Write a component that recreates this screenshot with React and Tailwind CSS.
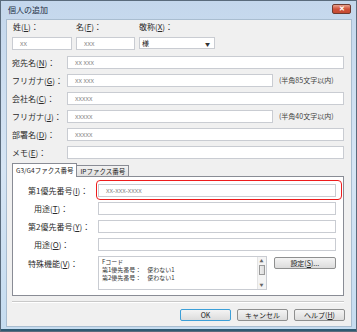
import React from "react";

const F = { fontFamily: '"Noto Sans CJK JP", "Noto Sans", sans-serif' };

function U({ c }) {
  return <span className="underline">{c}</span>;
}

function Lbl({ a, k, className = "" }) {
  return (
    <span className={"text-[8px] leading-none text-[#2a2a2a] whitespace-nowrap " + className}>
      {a}(<U c={k} />)：
    </span>
  );
}

function Inp({ v, className = "" }) {
  return (
    <div className={"h-[13px] bg-white border border-[#c9ccd2] flex items-center px-[7px] text-[7px] leading-none text-[#8a8a8a] " + className}>
      {v}
    </div>
  );
}

function Btn({ children, def, className = "" }) {
  return (
    <div
      className={
        "h-[12px] rounded-[2px] flex items-center justify-center text-[7px] leading-none text-[#222] bg-gradient-to-b from-[#f4f4f4] to-[#dcdcdc] " +
        (def ? "border border-[#3c9fd8] " : "border border-[#8e8f8f] ") +
        className
      }
    >
      {children}
    </div>
  );
}

function LW({ className = "", children }) {
  return <div className={"flex items-center shrink-0 " + className}>{children}</div>;
}

export default function App() {
  return (
    <div style={F} className="w-[357px] h-[332px] bg-white text-[8px] leading-none overflow-hidden">
      <div className="w-[357px] h-[332px] border border-[#5a6b7c] bg-gradient-to-b from-[#c4d7ec] via-[#d6e5f4] to-[#c5dcf0] flex flex-col">
        {/* title bar */}
        <div className="h-[18px] shrink-0 flex items-center justify-between pl-[7px] pr-[5px]">
          <span className="text-[8px] text-[#1e2f45] leading-none">個人の追加</span>
          <div className="w-[19px] h-[10px] mt-[-3px] rounded-[2px] border border-[#6e3a30] bg-gradient-to-b from-[#e8a08c] via-[#d0513a] to-[#c44a32] flex items-center justify-center text-white text-[7px] leading-none font-bold">
            ✕
          </div>
        </div>
        {/* client area */}
        <div className="ml-[5px] mr-[4px] h-[308px] shrink-0 bg-[#f0f0f0] border border-[#a9bdd0] relative">
          {/* row 1 */}
          <div className="flex pl-[5px] pt-[1px] gap-[4px]">
            <div className="w-[60px] flex flex-col gap-[4px]">
              <LW className="h-[12px] pl-[1px]"><Lbl a="姓" k="L" /></LW>
              <Inp v="xx" className="h-[12px] px-[3px]" />
            </div>
            <div className="w-[59px] flex flex-col gap-[4px]">
              <LW className="h-[12px]"><Lbl a="名" k="F" /></LW>
              <Inp v="xxx" className="h-[12px] px-[3px]" />
            </div>
            <div className="w-[76px] flex flex-col gap-[4px]">
              <LW className="h-[12px]"><Lbl a="敬称" k="X" /></LW>
              <div className="h-[12px] bg-white border border-[#c9ccd2] flex items-center justify-between pl-[2px] pr-[4px]">
                <span className="text-[7px] leading-none text-[#222]">様</span>
                <span className="text-[5px] leading-none text-[#333]">▼</span>
              </div>
            </div>
          </div>

          {/* big rows */}
          <div className="flex flex-col gap-[5px] mt-[6px] pl-[5px] pr-[7px]">
            <div className="flex items-center">
              <LW className="w-[55px]"><Lbl a="宛先名" k="N" /></LW>
              <Inp v="xx xxx" className="flex-1 px-[4px]" />
            </div>
            <div className="flex items-center">
              <LW className="w-[55px]"><Lbl a="フリガナ" k="G" /></LW>
              <Inp v="xx xxx" className="w-[206px] px-[4px]" />
              <span className="ml-[6px] text-[7px] leading-none text-[#444]">(半角85文字以内)</span>
            </div>
            <div className="flex items-center">
              <LW className="w-[55px]"><Lbl a="会社名" k="C" /></LW>
              <Inp v="xxxxx" className="flex-1 px-[4px]" />
            </div>
            <div className="flex items-center">
              <LW className="w-[55px]"><Lbl a="フリガナ" k="J" /></LW>
              <Inp v="xxxxx" className="w-[206px] px-[4px]" />
              <span className="ml-[6px] text-[7px] leading-none text-[#444]">(半角40文字以内)</span>
            </div>
            <div className="flex items-center">
              <LW className="w-[55px]"><Lbl a="部署名" k="D" /></LW>
              <Inp v="xxxxx" className="flex-1 px-[4px]" />
            </div>
            <div className="flex items-center">
              <LW className="w-[55px]"><Lbl a="メモ" k="E" /></LW>
              <Inp v="" className="flex-1 border-[#8fb8dc]" />
            </div>
          </div>

          {/* tabs */}
          <div className="mt-[4px] ml-[5px] mr-[7px]">
            <div className="flex items-end h-[13px]">
              <div className="h-[14px] px-[3px] flex items-center bg-white border border-[#898c95] border-b-0 relative z-10 mb-[-1px] text-[6.5px] leading-none text-[#222]">
                G3/G4ファクス番号
              </div>
              <div className="h-[11px] px-[3px] flex items-center bg-gradient-to-b from-[#f2f2f2] to-[#e0e0e0] border border-[#898c95] border-b-0 border-l-0 text-[6.5px] leading-none text-[#222]">
                IPファクス番号
              </div>
            </div>
            <div className="h-[120px] bg-white border border-[#898c95] pt-[7px] pr-[7px] relative">
              <div className="flex flex-col gap-[5px]">
                <div className="flex items-center">
                  <LW className="w-[85px] pl-[15px]"><Lbl a="第1優先番号" k="I" /></LW>
                  <Inp v="xx-xxx-xxxx" className="flex-1 h-[12px] px-[3px]" />
                </div>
                <div className="flex items-center">
                  <LW className="w-[85px] pl-[21px]"><Lbl a="用途" k="T" /></LW>
                  <Inp v="" className="flex-1 h-[12px]" />
                </div>
                <div className="flex items-center">
                  <LW className="w-[85px] pl-[15px]"><Lbl a="第2優先番号" k="Y" /></LW>
                  <Inp v="" className="flex-1 h-[12px]" />
                </div>
                <div className="flex items-center">
                  <LW className="w-[85px] pl-[21px]"><Lbl a="用途" k="O" /></LW>
                  <Inp v="" className="flex-1 h-[12px]" />
                </div>
                <div className="flex items-start">
                  <LW className="w-[85px] pl-[15px] pt-[4px]"><Lbl a="特殊機能" k="V" /></LW>
                  <div className="w-[170px] h-[34px] bg-white border border-[#c9ccd2] flex">
                    <div className="flex-1 pl-[3px] pt-[1px] text-[6px] leading-[8px] text-[#333]">
                      <div>Fコード</div>
                      <div>第1優先番号：　使わない1</div>
                      <div>第2優先番号：　使わない1</div>
                    </div>
                    <div className="w-[9px] border-l border-[#e4e4e4] bg-[#f4f4f4] flex flex-col items-center justify-between py-[2px]">
                      <span className="text-[4px] leading-none text-[#666]">▲</span>
                      <div className="w-[6px] h-[10px] border border-[#9a9a9a] bg-gradient-to-r from-[#eee] to-[#ddd] mb-[6px]"></div>
                      <span className="text-[4px] leading-none text-[#666]">▼</span>
                    </div>
                  </div>
                  <Btn className="ml-[7px] mt-[1px] w-[63px] h-[11px]">設定(<U c="S" />)...</Btn>
                </div>
              </div>
              {/* red highlight */}
              <div className="absolute left-[83px] top-[3px] w-[246px] h-[20px] border-[1.5px] border-[#ee1c1c] rounded-[4px]"></div>
            </div>
          </div>

          {/* separator */}
          <div className="mt-[5px] ml-[5px] mr-[7px] h-[2px] border-t border-[#c9c9c9] border-b border-b-white"></div>

          {/* buttons */}
          <div className="flex justify-end gap-[6px] mt-[6px] pr-[6px]">
            <Btn def className="w-[51px]">OK</Btn>
            <Btn className="w-[51px]">キャンセル</Btn>
            <Btn className="w-[51px]">ヘルプ(<U c="H" />)</Btn>
          </div>
        </div>
        <div className="flex-1 border-b-[2px] border-[#2f5a72]"></div>
      </div>
    </div>
  );
}
